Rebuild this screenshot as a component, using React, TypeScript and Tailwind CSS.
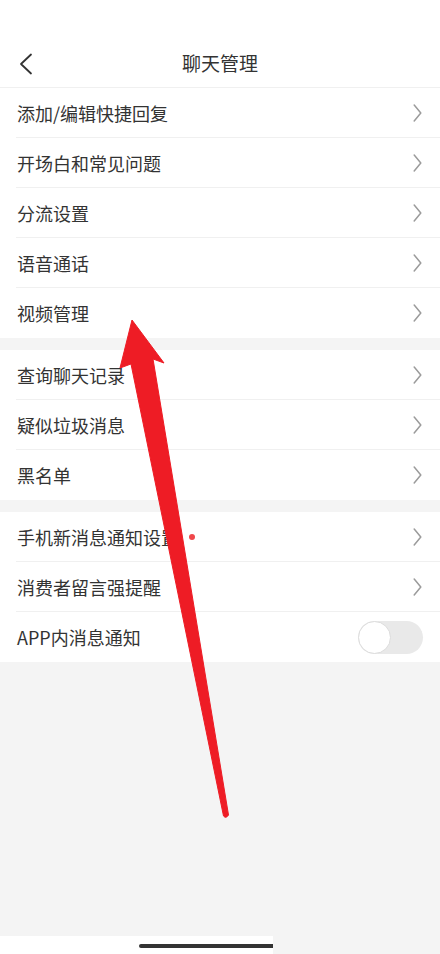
const groups: { label: string; dot?: boolean; toggle?: boolean }[][] = [
  [
    { label: '添加/编辑快捷回复' },
    { label: '开场白和常见问题' },
    { label: '分流设置' },
    { label: '语音通话' },
    { label: '视频管理' },
  ],
  [{ label: '查询聊天记录' }, { label: '疑似垃圾消息' }, { label: '黑名单' }],
  [
    { label: '手机新消息通知设置', dot: true },
    { label: '消费者留言强提醒' },
    { label: 'APP内消息通知', toggle: true },
  ],
];

function Chevron() {
  return (
    <svg width="9" height="18" viewBox="0 0 9 18" fill="none" className="mr-[1px]">
      <path d="M1.2 1 L7.8 9 L1.2 17" stroke="#9b9b9b" strokeWidth="1.5" strokeLinecap="round" strokeLinejoin="round" />
    </svg>
  );
}

function Row({ label, dot, toggle, last }: { label: string; dot?: boolean; toggle?: boolean; last: boolean }) {
  return (
    <div className="pl-4 bg-white">
      <div className={`h-[50px] flex items-center pr-[17px] ${last ? '' : 'border-b border-[#f0f0f0]'}`}>
        <span className="pl-px text-[18px] text-[#333333] leading-none">{label}</span>
        {dot && <span className="ml-[10px] w-[6px] h-[6px] rounded-full bg-[#f0474a]" />}
        <div className="flex-1" />
        {toggle ? (
          <div className="w-[65px] h-[33px] rounded-full bg-[#e9e9e9] flex items-center">
            <div className="w-[33px] h-[33px] rounded-full bg-white border border-[#dcdcdc]" />
          </div>
        ) : (
          <Chevron />
        )}
      </div>
    </div>
  );
}

export default function App() {
  return (
    <div
      className="relative w-[440px] min-h-[954px] flex flex-col bg-[#f4f4f4]"
      style={{ fontFamily: '"Noto Sans CJK SC", "Noto Sans", sans-serif' }}
    >
      {/* 顶部导航 */}
      <div className="bg-white pt-[40px] border-b border-[#f0f0f0]">
        <div className="h-[47px] relative flex items-center justify-center">
          <svg className="absolute left-[18px] top-[13px]" width="16" height="22" viewBox="0 0 16 22" fill="none">
            <path d="M13 1.5 L3 11 L13 20.5" stroke="#333" strokeWidth="1.8" strokeLinecap="round" strokeLinejoin="round" />
          </svg>
          <span className="text-[19px] text-[#333333] leading-none -mt-[2px]">聊天管理</span>
        </div>
      </div>

      {groups.map((items, gi) => (
        <div key={gi} className={gi > 0 ? 'mt-3' : ''}>
          {items.map((it, i) => (
            <Row key={it.label} {...it} last={i === items.length - 1} />
          ))}
        </div>
      ))}

      <div className="flex-1" />

      {/* 底部指示条 */}
      <div className="h-[18px] flex">
        <div className="w-[273px] bg-white flex items-center">
          <div className="ml-[139px] w-[134px] h-[4px] rounded-l-full bg-[#333333] mt-[1px]" />
        </div>
      </div>

      {/* 红色箭头标注 */}
      <svg className="absolute inset-0 pointer-events-none" width="440" height="954" viewBox="0 0 440 954">
        <path
          d="M132 320 L164 363 L153 359 L228.5 815 Q226 819 223.5 816 L131 364 L120 368 Z"
          fill="#ee1c25"
          stroke="#ee1c25"
          strokeWidth="1"
          strokeLinejoin="round"
        />
      </svg>
    </div>
  );
}
